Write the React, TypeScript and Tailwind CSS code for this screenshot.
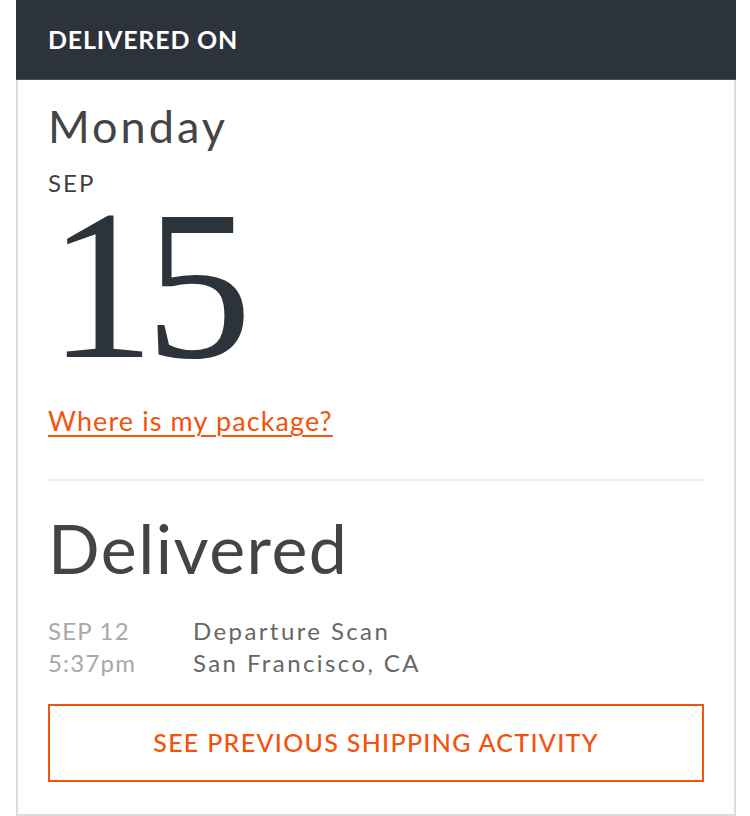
import React from "react";

export default function App() {
  const sans = { fontFamily: "Lato, 'Open Sans', sans-serif" };
  return (
    <div className="w-[750px] h-[816px] bg-white" style={sans}>
      <div className="ml-[16px] w-[720px] h-[816px] flex flex-col">
        <div className="h-[80px] bg-[#2d333b] border-b border-[#4a5058] flex items-center px-[32px]">
          <span className="text-white text-[25px] font-bold tracking-[0.8px]">DELIVERED ON</span>
        </div>
        <div className="flex-1 border-x-2 border-b-2 border-[#dddddd] px-[30px] flex flex-col">
          <div className="text-[45px] leading-[44px] text-[#444444] mt-[24px] tracking-[3px]">Monday</div>
          <div className="text-[24px] leading-[24px] text-[#3a3f45] mt-[23px] tracking-[2px]">SEP</div>
          <div
            className="text-[#2d333b] text-[214px] leading-[160px] mt-[10px] tracking-[-10px]"
            style={{ fontFamily: "'Liberation Serif', 'DejaVu Serif', serif" }}
          >
            15
          </div>
          <a
            href="#"
            className="mt-[40px] text-[27px] leading-[32px] text-[#f2530d] underline underline-offset-[4px] decoration-2 self-start tracking-[1.1px]"
          >
            Where is my package?
          </a>
          <div className="mt-[42px] h-[2px] bg-[#ececec]" />
          <div className="text-[68px] leading-[70px] text-[#444444] mt-[32px] tracking-[1.5px]">Delivered</div>
          <div className="flex mt-[32px] text-[24px] leading-[32px]">
            <div className="w-[145px] text-[#a8a8a8] tracking-[1.2px]">
              <div>SEP 12</div>
              <div>5:37pm</div>
            </div>
            <div className="text-[#666666] tracking-[2.4px]">
              <div>Departure Scan</div>
              <div>San Francisco, CA</div>
            </div>
          </div>
          <button className="mt-[25px] h-[78px] border-2 border-[#f2530d] text-[#f2530d] text-[25px] font-medium tracking-[1.3px] flex items-center justify-center">
            SEE PREVIOUS SHIPPING ACTIVITY
          </button>
        </div>
      </div>
    </div>
  );
}
